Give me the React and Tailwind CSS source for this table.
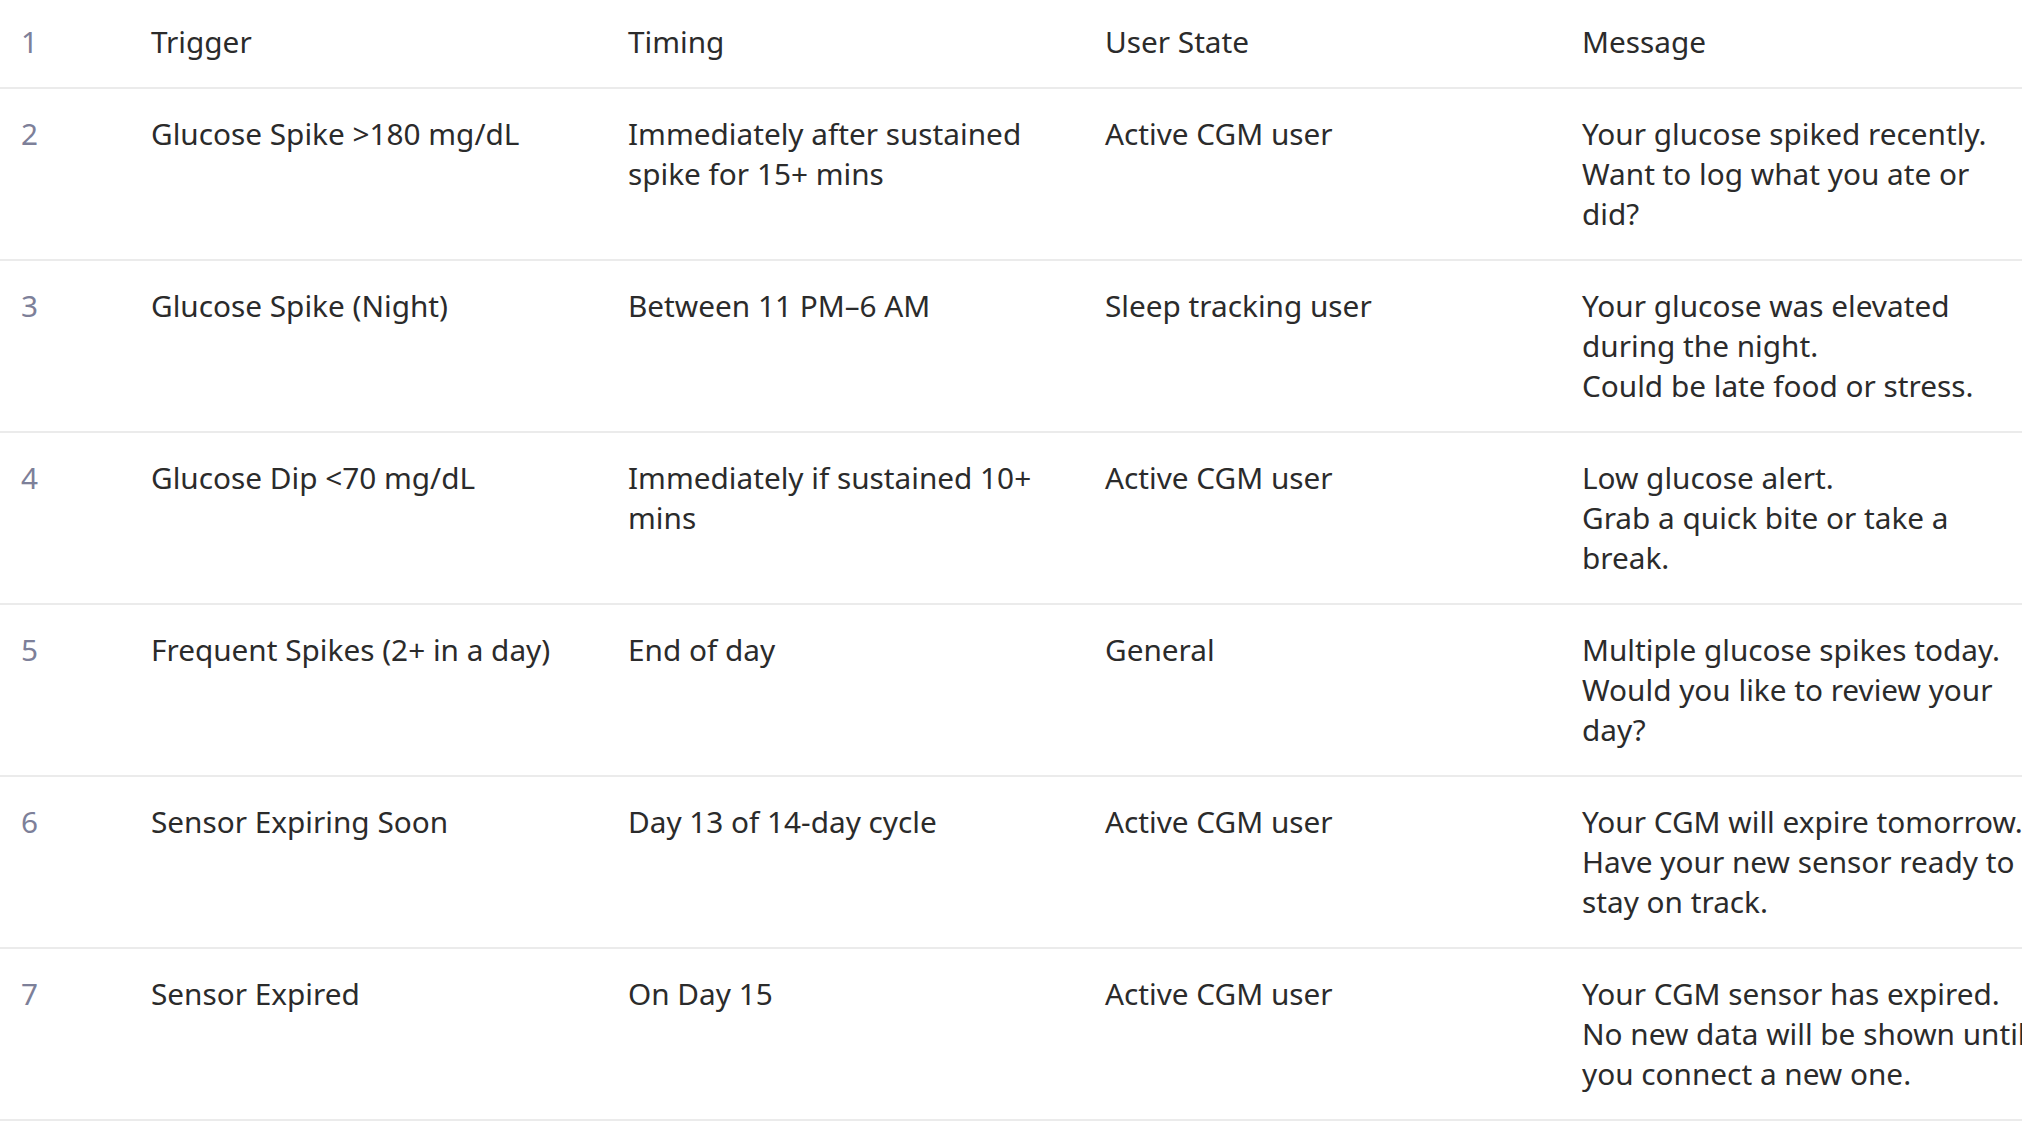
const rows = [
  {
    n: 2,
    trigger: "Glucose Spike >180 mg/dL",
    timing: "Immediately after sustained spike for 15+ mins",
    state: "Active CGM user",
    message: ["Your glucose spiked recently.", "Want to log what you ate or did?"],
  },
  {
    n: 3,
    trigger: "Glucose Spike (Night)",
    timing: "Between 11 PM–6 AM",
    state: "Sleep tracking user",
    message: ["Your glucose was elevated during the night.", "Could be late food or stress."],
  },
  {
    n: 4,
    trigger: "Glucose Dip <70 mg/dL",
    timing: "Immediately if sustained 10+ mins",
    state: "Active CGM user",
    message: ["Low glucose alert.", "Grab a quick bite or take a break."],
  },
  {
    n: 5,
    trigger: "Frequent Spikes (2+ in a day)",
    timing: "End of day",
    state: "General",
    message: ["Multiple glucose spikes today.", "Would you like to review your day?"],
  },
  {
    n: 6,
    trigger: "Sensor Expiring Soon",
    timing: "Day 13 of 14-day cycle",
    state: "Active CGM user",
    message: ["Your CGM will expire tomorrow.", "Have your new sensor ready to stay on track."],
  },
  {
    n: 7,
    trigger: "Sensor Expired",
    timing: "On Day 15",
    state: "Active CGM user",
    message: ["Your CGM sensor has expired.", "No new data will be shown until you connect a new one."],
  },
];

function Cell({ children, first }) {
  return (
    <div className={first ? "w-[130px] shrink-0 pl-[21px] text-[#7d8099]" : "w-[477px] shrink-0 pl-[21px] pr-[10px]"}>
      {children}
    </div>
  );
}

export default function App() {
  return (
    <div
      className="w-[2022px] h-[1122px] overflow-hidden bg-white text-[29.75px] leading-[40px] text-[#2b2b2b]"
      style={{ fontFamily: '"Noto Sans", "Open Sans", sans-serif' }}
    >
      <div className="-mt-[3px]">
        <div className="flex border-b-2 border-[#ebebeb] py-[25px]">
          <Cell first>1</Cell>
          <Cell>Trigger</Cell>
          <Cell>Timing</Cell>
          <Cell>User State</Cell>
          <Cell>Message</Cell>
        </div>
        {rows.map((r) => (
          <div key={r.n} className="flex border-b-2 border-[#ebebeb] pt-[25px] pb-[25px] min-h-[172px]">
            <Cell first>{r.n}</Cell>
            <Cell>{r.trigger}</Cell>
            <Cell>{r.timing}</Cell>
            <Cell>{r.state}</Cell>
            <Cell>
              {r.message.map((m, i) => (
                <div key={i}>{m}</div>
              ))}
            </Cell>
          </div>
        ))}
      </div>
    </div>
  );
}
